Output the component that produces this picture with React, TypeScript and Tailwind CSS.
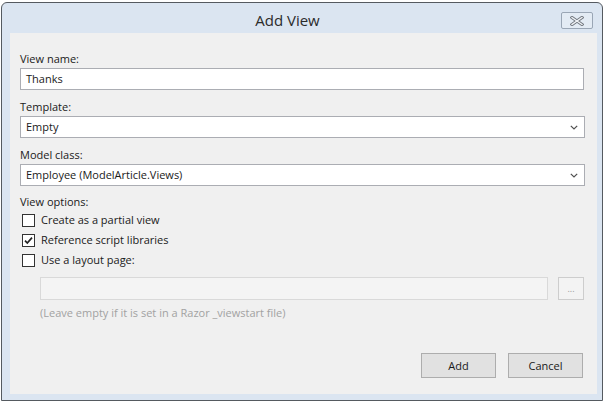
import React from "react";

function Checkbox({ checked }: { checked?: boolean }) {
  return (
    <div className="w-[13px] h-[13px] border border-[#333333] bg-white ml-[2px] flex items-center justify-center shrink-0">
      {checked && (
        <svg width="11" height="11" viewBox="0 0 11 11">
          <path d="M2 5.6 L4.3 8 L9 2.6" fill="none" stroke="#222" strokeWidth="1.7" />
        </svg>
      )}
    </div>
  );
}

function Chevron() {
  return (
    <svg width="8" height="5" viewBox="0 0 8 5" className="shrink-0">
      <path d="M0.8 0.8 L4 4 L7.2 0.8" fill="none" stroke="#505050" strokeWidth="1.2" />
    </svg>
  );
}

export default function App() {
  return (
    <div className="w-[604px] h-[405px] bg-white pt-[2px] pl-[1px] font-['Open_Sans',sans-serif] text-[11px] leading-[16px] text-[#1a1a1a]">
      <div className="w-[602px] h-[399px] border border-[#555a60] rounded-t-[6px] bg-[#dbe5f1] flex flex-col pl-[8px] pr-[5px] pb-[6px]">
        {/* Title bar */}
        <div className="h-[30px] flex items-start shrink-0">
          <div className="flex-1 h-full flex items-center justify-center pl-[4px] text-[15px] text-[#2b2b2b] pt-[3px]">
            Add View
          </div>
          <div className="mt-[9px] mr-[4px] w-[32px] h-[17px] rounded-[2px] border border-[#9aa6b5] bg-[#e3ebf4] flex items-center justify-center">
            <svg width="14" height="10" viewBox="0 0 14 10">
              <path d="M2 1.5 L12 8.5 M12 1.5 L2 8.5" stroke="#6d737b" strokeWidth="3.2" strokeLinecap="square" />
              <path d="M2 1.5 L12 8.5 M12 1.5 L2 8.5" stroke="#eef1f5" strokeWidth="1.4" strokeLinecap="square" />
            </svg>
          </div>
        </div>

        {/* Content */}
        <div className="flex-1 bg-[#f0f0f0] pl-[10px] pr-[13px] pt-[18px] flex flex-col">
          <div className="h-[16px] mb-[1px]">View name:</div>
          <div className="h-[22px] border border-[#abadb3] bg-white pl-[5px] flex items-center mb-[9px]">Thanks</div>

          <div className="h-[16px] mb-[1px]">Template:</div>
          <div className="h-[22px] border border-[#abadb3] bg-white pl-[5px] pr-[6px] flex items-center justify-between mb-[9px] -mr-[1px]">
            <span>Empty</span>
            <Chevron />
          </div>

          <div className="h-[16px] mb-[1px]">Model class:</div>
          <div className="h-[22px] border border-[#abadb3] bg-white pl-[5px] pr-[6px] flex items-center justify-between -mr-[1px]">
            <span>Employee (ModelArticle.Views)</span>
            <Chevron />
          </div>

          <div className="h-[16px] mt-[8px]">View options:</div>
          <div className="h-[20px] flex items-center gap-[6px]">
            <Checkbox />
            <span>Create as a partial view</span>
          </div>
          <div className="h-[20px] flex items-center gap-[6px]">
            <Checkbox checked />
            <span>Reference script libraries</span>
          </div>
          <div className="h-[20px] flex items-center gap-[6px]">
            <Checkbox />
            <span>Use a layout page:</span>
          </div>

          <div className="mt-[7px] ml-[20px] flex gap-[10px]">
            <div className="flex-1 h-[23px] border border-[#d9d9d9] bg-[#f4f4f4]" />
            <div className="w-[26px] h-[23px] border border-[#cdcdcd] bg-[#f3f3f3] flex items-center justify-center text-[9px] text-[#9a9a9a] leading-none pb-[1px]">
              ...
            </div>
          </div>
          <div className="mt-[5px] ml-[20px] text-[#a2a2a2]">(Leave empty if it is set in a Razor _viewstart file)</div>

          <div className="flex-1" />
          <div className="flex justify-end gap-[12px] pr-[1px] mb-[16px]">
            <div className="w-[75px] h-[25px] border border-[#adadad] bg-[#e1e1e1] flex items-center justify-center">Add</div>
            <div className="w-[75px] h-[25px] border border-[#adadad] bg-[#e1e1e1] flex items-center justify-center">Cancel</div>
          </div>
        </div>
      </div>
    </div>
  );
}
